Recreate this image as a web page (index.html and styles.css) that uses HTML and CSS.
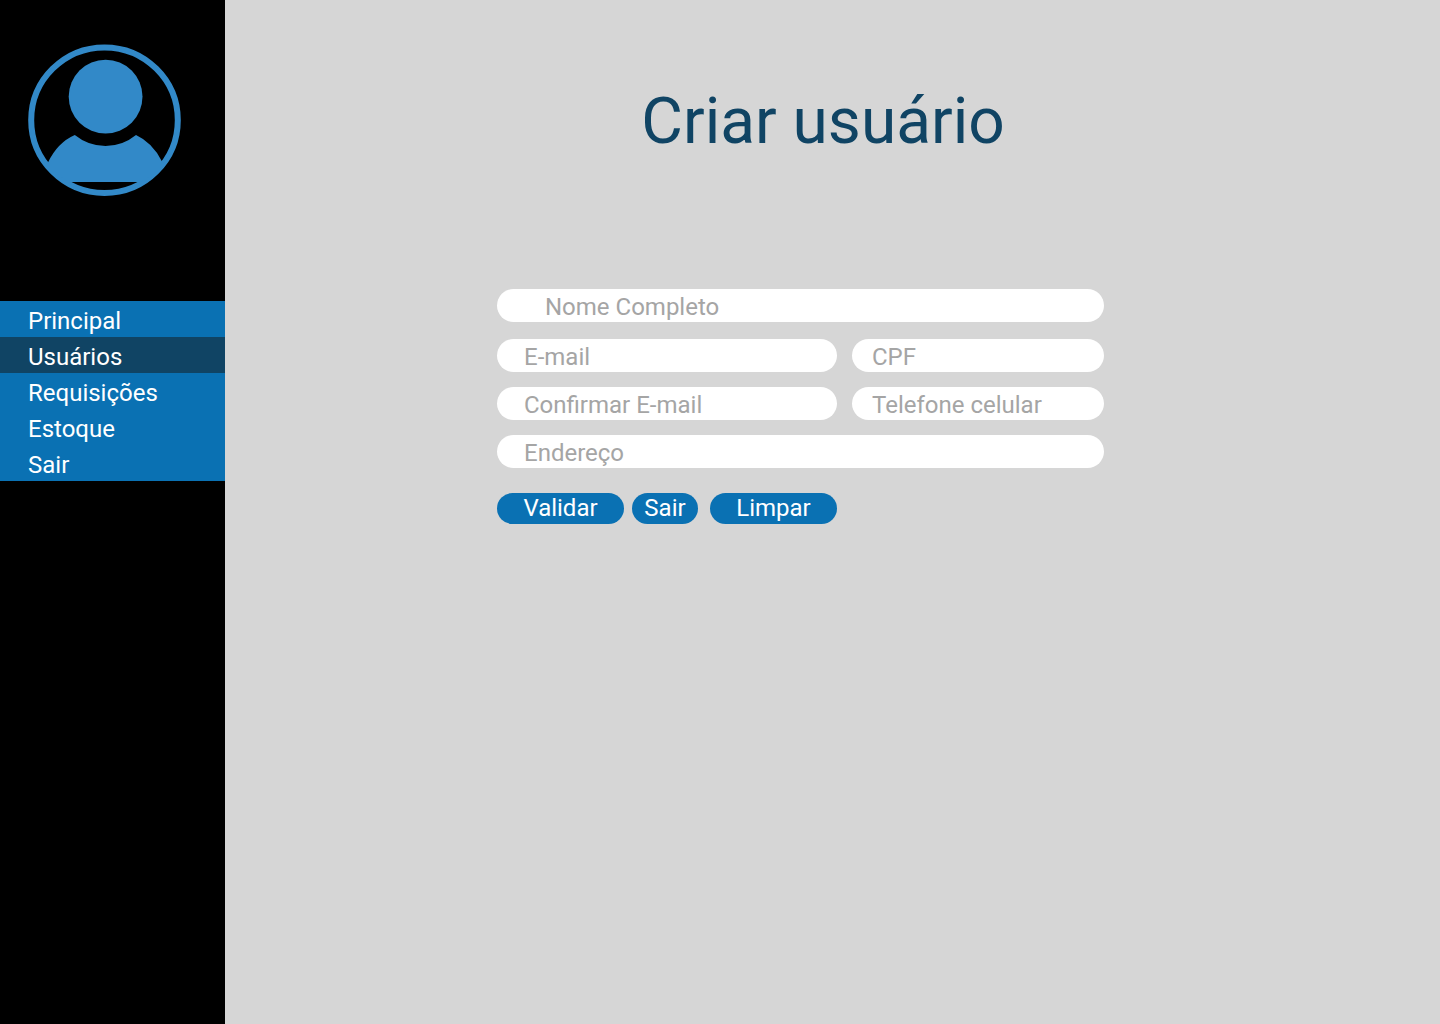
FILE: index.html
```html
<!DOCTYPE html>
<html lang="pt-BR">
<head>
  <meta charset="utf-8">
  <meta name="viewport" content="width=device-width, initial-scale=1">
  <title>Criar usuário</title>
  <link rel="stylesheet" href="styles.css">
</head>
<body>
  <div class="app">
    <aside class="sidebar">
      <svg class="avatar" viewBox="0 0 153 152" width="153" height="152" aria-hidden="true">
        <ellipse class="avatar-ring" cx="76.5" cy="76.2" rx="73.3" ry="72.8"/>
        <circle class="avatar-fill" cx="77.6" cy="52.6" r="36.9"/>
        <path class="avatar-fill" d="M20 118.5Q29.5 98.5 46.8 91Q60.5 102 77.5 102Q94.5 102 108 91Q124.5 98.5 134 117.5L136 119A73 73 0 0 1 113 138H41A73 73 0 0 1 18 119Z"/>
      </svg>
      <nav class="menu">
        <a class="menu-item" href="#principal">Principal</a>
        <a class="menu-item menu-item-active" href="#usuarios" aria-current="page">Usuários</a>
        <a class="menu-item" href="#requisicoes">Requisições</a>
        <a class="menu-item" href="#estoque">Estoque</a>
        <a class="menu-item" href="#sair">Sair</a>
      </nav>
    </aside>
    <main class="content">
      <h1 class="title">Criar usuário</h1>
      <form class="form">
        <input class="field field-wide field-name" type="text" name="nome" placeholder="Nome Completo" aria-label="Nome Completo">
        <input class="field" type="email" name="email" placeholder="E-mail" aria-label="E-mail">
        <input class="field field-short" type="text" name="cpf" placeholder="CPF" aria-label="CPF">
        <input class="field" type="email" name="confirmar-email" placeholder="Confirmar E-mail" aria-label="Confirmar E-mail">
        <input class="field field-short" type="tel" name="telefone" placeholder="Telefone celular" aria-label="Telefone celular">
        <input class="field field-wide" type="text" name="endereco" placeholder="Endereço" aria-label="Endereço">
        <div class="actions">
          <button class="button" type="submit">Validar</button>
          <button class="button button-small" type="button">Sair</button>
          <button class="button" type="reset">Limpar</button>
        </div>
      </form>
    </main>
  </div>
</body>
</html>
```
FILE: styles.css
```css
*,
*::before,
*::after {
  box-sizing: border-box;
}

body {
  margin: 0;
  background: #d6d6d6;
  font-family: Roboto, "Liberation Sans", sans-serif;
  font-size: 24px;
}

.app {
  display: flex;
  min-height: 100vh;
}

.sidebar {
  flex: 0 0 225px;
  padding-top: 44px;
  background: #000;
}

.avatar {
  display: block;
  margin: 0 28px 105px;
}

.avatar-ring {
  fill: none;
  stroke: #3289c8;
  stroke-width: 6;
}

.avatar-fill {
  fill: #3289c8;
}

.menu {
  display: flex;
  flex-direction: column;
  background: #0a71b3;
}

.menu-item {
  padding: 4px 28px 0;
  color: #fff;
  line-height: 32px;
  text-decoration: none;
}

.menu-item-active {
  background: #104464;
}

.content {
  flex: 1;
  min-width: 0;
  padding: 84px 64px 48px 0;
}

.title {
  margin: 0 0 129px;
  padding-left: 45px;
  color: #104464;
  font-size: 64px;
  font-weight: 400;
  line-height: 76px;
  text-align: center;
}

.form {
  display: grid;
  grid-template-columns: 340fr 252fr;
  gap: 15px;
  max-width: 607px;
  margin: 0 auto;
}

.field {
  width: 100%;
  min-width: 0;
  height: 33px;
  padding: 3px 27px 0;
  border: 0;
  border-radius: 17px;
  background: #fff;
  color: #333;
  font: inherit;
}

.field::placeholder {
  color: #a5a5a5;
  opacity: 1;
}

.field-wide {
  grid-column: 1 / -1;
}

.field-name {
  margin-bottom: 2px;
  padding-left: 48px;
}

.field-short {
  padding-left: 20px;
}

.actions {
  display: flex;
  grid-column: 1 / -1;
  gap: 8px;
  margin-top: 10px;
}

.button {
  width: 127px;
  height: 31px;
  padding: 0;
  border: 0;
  border-radius: 16px;
  background: #0a71b3;
  color: #fff;
  font: inherit;
  line-height: 31px;
  cursor: pointer;
}

.button-small {
  width: 66px;
  margin-right: 4px;
}
```
